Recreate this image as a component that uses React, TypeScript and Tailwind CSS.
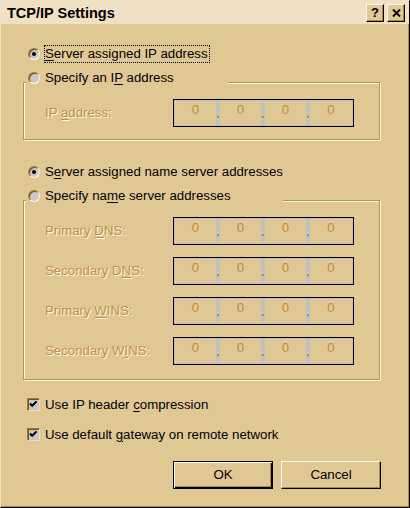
import React from 'react';

// ── palette (Win98 "Desert" scheme) ───────────────────────────────────────────
// face #e0c894 · light #fff8ec · shadow #b08840 · etched #c09048

const RAISED =
  'border border-t-[#fff8ec] border-l-[#fff8ec] border-r-black border-b-black shadow-[inset_-1px_-1px_0_#b08840]';

const Mn: React.FC<{ children: React.ReactNode }> = ({ children }) => (
  <span className="underline underline-offset-[2px] decoration-1">{children}</span>
);

const Radio: React.FC<{ checked?: boolean }> = ({ checked }) => (
  <div className="w-3 h-3 shrink-0 rounded-full border border-t-[#a07838] border-l-[#a07838] border-r-[#fff8ec] border-b-[#fff8ec] bg-[#c8c8c8] shadow-[inset_1px_1px_0_#6a5428] flex items-center justify-center">
    {checked && <div className="w-1 h-1 rounded-full bg-black" />}
  </div>
);

const CheckBox: React.FC = () => (
  <div className="w-[13px] h-[13px] shrink-0 border border-t-[#a07838] border-l-[#a07838] border-r-[#f0dcb0] border-b-[#f0dcb0] bg-[#c8c8c8] shadow-[inset_1px_1px_0_#6a5428]">
    <svg width="11" height="11" viewBox="0 0 11 11">
      <path d="M2 4.5 L4.2 6.8 L8.6 2.4" stroke="black" strokeWidth="2" fill="none" />
    </svg>
  </div>
);

const Disabled: React.FC<{ children: React.ReactNode }> = ({ children }) => (
  <span className="text-[#c09048] [text-shadow:1px_1px_0_#fff8ec]">{children}</span>
);

const IpBox: React.FC = () => (
  <div className="flex h-[28px] w-[181px] border border-black bg-[#c0c0c0] p-px">
    {[0, 1, 2, 3].map((i) => (
      <React.Fragment key={i}>
        {i > 0 && (
          <div className="w-[4px] pt-[15px] pl-px">
            <div className="w-[2px] h-[2px] bg-[#c08c3c]" />
          </div>
        )}
        <div className={`${i === 3 ? 'w-[42px]' : 'w-[41px]'} bg-[#e0c894] flex justify-center pt-px leading-[15px] text-[#c08c3c]`}>
          0
        </div>
      </React.Fragment>
    ))}
  </div>
);

const IpRow: React.FC<{ children: React.ReactNode }> = ({ children }) => (
  <div className="flex items-center">
    <div className="w-[149px] pl-[21px]">
      <Disabled>{children}</Disabled>
    </div>
    <IpBox />
  </div>
);

const Group: React.FC<{ legendWidth: string; legend: React.ReactNode; children: React.ReactNode; className: string }> = ({
  legendWidth, legend, children, className,
}) => (
  <div>
    <div className={`relative z-[1] ml-[3px] h-4 ${legendWidth} bg-[#e0c894] flex items-center gap-[5px] pl-[2px]`}>
      <Radio />
      <span>{legend}</span>
    </div>
    <div className={`-mt-[4px] w-[357px] border border-[#c09048] shadow-[1px_1px_0_#fff8ec,inset_1px_1px_0_#fff8ec] ${className}`}>
      {children}
    </div>
  </div>
);

export default function App() {
  return (
    <div className="w-[410px] h-[508px] flex flex-col bg-[#e0c894] border border-t-[#f0e0c4] border-l-[#f0e0c4] border-r-black border-b-black shadow-[inset_-1px_-1px_0_#b08840] font-['Liberation_Sans',Arial,sans-serif] text-[13.25px] text-black leading-4 select-none">

      {/* ── Title bar ───────────────────────────────────────────── */}
      <div className="h-[23px] shrink-0 bg-[#f0e0c4] flex items-center justify-between pl-[6px] pr-[4px]">
        <span className="font-bold text-[14.5px]">TCP/IP Settings</span>
        <div className="flex gap-[3px]">
          <div className={`w-[18px] h-[18px] bg-[#e0c894] flex items-center justify-center font-bold text-[13px] leading-none ${RAISED}`}>
            ?
          </div>
          <div className={`w-[18px] h-[18px] bg-[#e0c894] flex items-center justify-center ${RAISED}`}>
            <svg width="9" height="8" viewBox="0 0 9 8">
              <path d="M1 0.5 L8 7.5 M8 0.5 L1 7.5" stroke="black" strokeWidth="1.9" />
            </svg>
          </div>
        </div>
      </div>

      {/* ── Body ────────────────────────────────────────────────── */}
      <div className="pl-[22px] flex flex-col">
        <div className="mt-[21px] ml-[5px] h-[18px] flex items-center gap-[4px]">
          <Radio checked />
          <span className="h-[18px] flex items-center border border-dotted border-black pr-px">
            <span><Mn>S</Mn>erver assigned IP address</span>
          </span>
        </div>

        <div className="mt-[7px]">
          <Group
            legendWidth="w-[201px]"
            legend={<>Specify an I<Mn>P</Mn> address</>}
            className="pt-[16px] pb-[12px]"
          >
            <IpRow>IP <Mn>a</Mn>ddress:</IpRow>
          </Group>
        </div>

        <div className="mt-[24px] ml-[5px] h-4 flex items-center gap-[5px]">
          <Radio checked />
          <span>S<Mn>e</Mn>rver assigned name server addresses</span>
        </div>

        <div className="mt-[8px]">
          <Group
            legendWidth="w-[257px]"
            legend={<>Specify na<Mn>m</Mn>e server addresses</>}
            className="pt-[16px] pb-[14px] flex flex-col gap-[12px]"
          >
            <IpRow>Primary <Mn>D</Mn>NS:</IpRow>
            <IpRow>Secondary D<Mn>N</Mn>S:</IpRow>
            <IpRow>Primary <Mn>W</Mn>INS:</IpRow>
            <IpRow>Secondary W<Mn>I</Mn>NS:</IpRow>
          </Group>
        </div>

        <div className="mt-[18px] ml-[4px] h-[13px] flex items-center gap-[5px]">
          <CheckBox />
          <span>Use IP header <Mn>c</Mn>ompression</span>
        </div>
        <div className="mt-[17px] ml-[4px] h-[13px] flex items-center gap-[5px]">
          <CheckBox />
          <span>Use default <Mn>g</Mn>ateway on remote network</span>
        </div>

        {/* ── Buttons ─────────────────────────────────────────── */}
        <div className="mt-[20px] ml-[150px] flex gap-[8px]">
          <button className="w-[100px] h-[28px] bg-[#e0c894] border border-black shadow-[inset_1px_1px_0_#fff8ec,inset_-1px_-1px_0_#000,inset_-2px_-2px_0_#b08840] flex items-center justify-center">
            OK
          </button>
          <button className={`w-[100px] h-[28px] bg-[#e0c894] flex items-center justify-center ${RAISED}`}>
            Cancel
          </button>
        </div>
      </div>
    </div>
  );
}
